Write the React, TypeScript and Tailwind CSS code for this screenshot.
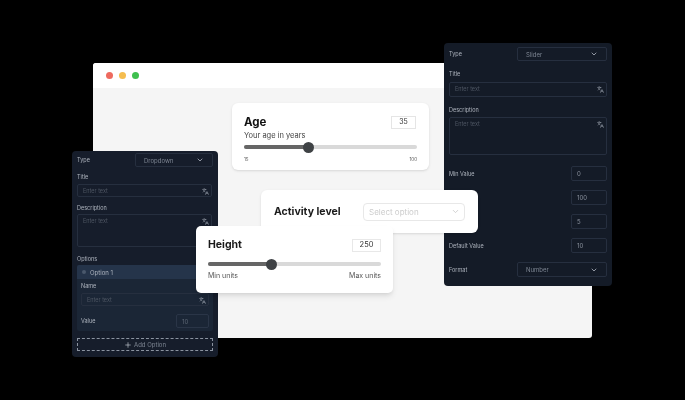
import { ChevronDown, Languages, Plus } from "lucide-react";

const Label = ({ children }: { children: React.ReactNode }) => (
  <p className="text-[5.5px] leading-[8px] text-[#aeb4be]">{children}</p>
);

const Select = ({ value, className }: { value: string; className: string }) => (
  <div className={`flex items-center justify-between rounded-[2px] border border-[#262f3f] px-2 ${className}`}>
    <span className="text-[6px] text-[#7d8592]">{value}</span>
    <ChevronDown size={8} strokeWidth={2.5} className="text-[#aab0ba]" />
  </div>
);

const TextInput = ({ className }: { className: string }) => (
  <div className={`flex justify-between rounded-[2px] border border-[#262f3f] pl-[5px] pr-[2px] ${className}`}>
    <span className="text-[5.5px] leading-[12px] text-[#4d5562]">Enter text</span>
    <Languages size={7} className="mt-[3px] text-[#9aa1ac]" />
  </div>
);

const NumberRow = ({ label, value }: { label: string; value: string }) => (
  <div className="flex h-[15px] items-center justify-between">
    <Label>{label}</Label>
    <div className="flex h-[15px] w-[36px] items-center rounded-[2px] border border-[#262f3f] px-[5px] text-[6px] text-[#8b929e]">
      {value}
    </div>
  </div>
);

const Slider = ({ pct, knob }: { pct: string; knob: string }) => (
  <div className="relative h-[4px] rounded-full bg-[#d9d9d9]">
    <div className={`h-[4px] rounded-full bg-[#666666] ${pct}`} />
    <div className={`absolute top-[-3.5px] h-[11px] w-[11px] rounded-full bg-[#3f4245] ${knob}`} />
  </div>
);

export default function App() {
  return (
    <div className="relative h-[400px] w-[685px] overflow-hidden bg-black font-['Inter',sans-serif] antialiased blur-[0.35px]">
      {/* ventana principal */}
      <div className="absolute left-[93px] top-[63px] flex h-[275px] w-[499px] flex-col overflow-hidden rounded-[3px] bg-[#f5f5f5]">
        <div className="flex h-[25px] items-center gap-[6px] bg-white pl-[13px]">
          <span className="h-[7px] w-[7px] rounded-full bg-[#ee6a5f]" />
          <span className="h-[7px] w-[7px] rounded-full bg-[#f5bd4f]" />
          <span className="h-[7px] w-[7px] rounded-full bg-[#3fc04f]" />
        </div>
      </div>

      {/* panel derecho */}
      <div className="absolute left-[444px] top-[43px] flex h-[243px] w-[168px] flex-col rounded-[4px] bg-[#141b27] pl-[5px] pr-[5px] pt-[4px]">
        <div className="flex items-center justify-between">
          <Label>Type</Label>
          <Select value="Slider" className="h-[14px] w-[90px]" />
        </div>
        <div className="mt-[9px]">
          <Label>Title</Label>
        </div>
        <TextInput className="mt-[4px] h-[15px]" />
        <div className="mt-[9px]">
          <Label>Description</Label>
        </div>
        <TextInput className="mt-[3px] h-[38px]" />
        <div className="mt-[11px] flex flex-col gap-[9px]">
          <NumberRow label="Min Value" value="0" />
          <NumberRow label="Max Value" value="100" />
          <NumberRow label="Step" value="5" />
          <NumberRow label="Default Value" value="10" />
        </div>
        <div className="mt-[9px] flex items-center justify-between">
          <Label>Format</Label>
          <Select value="Number" className="h-[15px] w-[90px]" />
        </div>
      </div>

      {/* panel izquierdo */}
      <div className="absolute left-[72px] top-[151px] flex h-[206px] w-[146px] flex-col rounded-[4px] bg-[#161d2b] pl-[5px] pr-[5px] pt-[2px]">
        <div className="flex items-center justify-between">
          <Label>Type</Label>
          <Select value="Dropdown" className="h-[14px] w-[78px]" />
        </div>
        <div className="mt-[6px]">
          <Label>Title</Label>
        </div>
        <TextInput className="mt-[3px] mr-[1px] h-[13px]" />
        <div className="mt-[7px]">
          <Label>Description</Label>
        </div>
        <TextInput className="mt-[2px] mr-[1px] h-[33px]" />
        <div className="mt-[8px]">
          <Label>Options</Label>
        </div>
        <div className="mt-[2px] h-[66px] rounded-[2px] bg-[#1b2636]">
          <div className="flex h-[14px] items-center gap-[4px] rounded-t-[2px] bg-[#25344a] pl-[5px]">
            <span className="h-[4px] w-[4px] rounded-full bg-[#4a586c]" />
            <span className="text-[6px] text-[#aeb5c0]">Option 1</span>
          </div>
          <div className="px-[4px] pt-[3px]">
            <Label>Name</Label>
            <TextInput className="mt-[3px] h-[13px]" />
            <div className="mt-[8px] flex items-center justify-between">
              <Label>Value</Label>
              <div className="flex h-[14px] w-[33px] items-center rounded-[2px] border border-[#2a3547] px-[5px] text-[6px] text-[#5d6775]">10</div>
            </div>
          </div>
        </div>
        <div className="mt-[7px] flex h-[13px] items-center justify-center gap-[2px] border border-dashed border-[#8b93a0]">
          <Plus size={8} className="text-[#c3c8d1]" />
          <span className="text-[6px] text-[#7d8592]">Add Option</span>
        </div>
      </div>

      {/* tarjeta Age */}
      <div className="absolute left-[232px] top-[103px] h-[67px] w-[197px] rounded-[6px] bg-white px-[12px] pt-[11px] shadow-sm">
        <div className="flex items-center justify-between pr-[1px]">
          <span className="text-[11.5px] font-bold leading-[16px] text-[#111111]">Age</span>
          <div className="flex h-[13px] w-[25px] items-center justify-center border border-[#e5e5e5] text-[7px] text-[#333333]">35</div>
        </div>
        <p className="text-[7.5px] leading-[11px] text-[#444444]">Your age in years</p>
        <div className="mt-[4px]">
          <Slider pct="w-[37%]" knob="left-[59px]" />
        </div>
        <div className="mt-[8px] flex justify-between text-[4.5px] text-[#555555]">
          <span>15</span>
          <span>100</span>
        </div>
      </div>

      {/* tarjeta Activity level */}
      <div className="absolute left-[261px] top-[190px] flex h-[43px] w-[217px] items-center justify-between rounded-[6px] bg-white pl-[13px] pr-[13px] shadow-sm">
        <span className="text-[10.5px] font-bold text-[#1a1a1a]">Activity level</span>
        <div className="flex h-[18px] w-[102px] items-center justify-between rounded-[4px] border border-[#e8e8e8] pl-[5px] pr-[4px]">
          <span className="text-[8px] text-[#cccccc]">Select option</span>
          <ChevronDown size={9} className="text-[#c4c4c4]" />
        </div>
      </div>

      {/* tarjeta Height */}
      <div className="absolute left-[196px] top-[226px] h-[67px] w-[197px] rounded-[5px] bg-white pl-[12px] pr-[12px] pt-[12px] shadow-md">
        <div className="flex items-center justify-between">
          <span className="text-[10.5px] font-bold leading-[14px] text-[#1a1a1a]">Height</span>
          <div className="flex h-[13px] w-[29px] items-center justify-center border border-[#e8e8e8] text-[7.5px] text-[#333333]">250</div>
        </div>
        <div className="mt-[10px]">
          <Slider pct="w-[37%]" knob="left-[58px]" />
        </div>
        <div className="mt-[5px] flex justify-between text-[7px] leading-[10px] text-[#555555]">
          <span>Min units</span>
          <span>Max units</span>
        </div>
      </div>
    </div>
  );
}
